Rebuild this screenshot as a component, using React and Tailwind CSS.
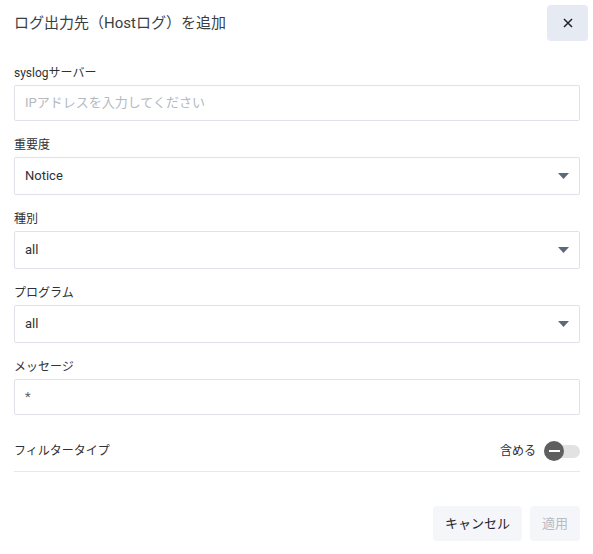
import React from 'react';

const font = { fontFamily: 'Roboto, "Noto Sans CJK JP", sans-serif' };

function Label({ children }) {
  return <div className="h-[16px] mb-[4px] text-[12px] leading-[16px] text-[#303133]">{children}</div>;
}

function Arrow() {
  return (
    <svg width="11" height="6" viewBox="0 0 11 6" className="shrink-0">
      <path d="M0 0 L11 0 L5.5 6 Z" fill="#5d6878" />
    </svg>
  );
}

function SelectField({ label, value }) {
  return (
    <div className="mb-[16px]">
      <Label>{label}</Label>
      <div className="h-[38px] border border-[#dfe2e8] rounded-[2px] flex items-center justify-between pl-[10px] pr-[10px]">
        <span className="text-[13px] text-[#303133]">{value}</span>
        <Arrow />
      </div>
    </div>
  );
}

function InputField({ label, value, placeholder }) {
  return (
    <div>
      <Label>{label}</Label>
      <div className="h-[36px] border border-[#dfe2e8] rounded-[2px] flex items-center pl-[10px]">
        {value ? (
          <span className="text-[13px] text-[#606266]">{value}</span>
        ) : (
          <span className="text-[13px] text-[#b4b8bf]">{placeholder}</span>
        )}
      </div>
    </div>
  );
}

export default function App() {
  return (
    <div className="w-[593px] h-[554px] bg-white" style={font}>
      {/* ヘッダー */}
      <div className="flex justify-between items-start pl-[14px] pr-[5px] pt-[5px]">
        <h1 className="h-[36px] leading-[36px] text-[15px] text-[#3a3d42]">ログ出力先（Hostログ）を追加</h1>
        <button className="w-[41px] h-[36px] rounded-[4px] bg-[#e6eaf2] flex items-center justify-center">
          <svg width="10" height="10" viewBox="0 0 10 10">
            <path d="M1 1 L9 9 M9 1 L1 9" stroke="#1f2329" strokeWidth="1.5" />
          </svg>
        </button>
      </div>

      {/* フォーム */}
      <div className="pl-[14px] pr-[13px] pt-[24px]">
        <div className="mb-[16px]">
          <InputField label="syslogサーバー" placeholder="IPアドレスを入力してください" />
        </div>
        <SelectField label="重要度" value="Notice" />
        <SelectField label="種別" value="all" />
        <SelectField label="プログラム" value="all" />
        <InputField label="メッセージ" value="*" />

        <div className="mt-[16px] h-[41px] border-b border-[#e6e8ec] flex items-center justify-between">
          <span className="text-[12px] text-[#303133]">フィルタータイプ</span>
          <div className="flex items-center gap-[8px]">
            <span className="text-[12px] text-[#303133]">含める</span>
            <div className="relative w-[36px] h-[20px] flex items-center">
              <div className="w-[36px] h-[13px] rounded-full bg-[#e2e2e2]" />
              <div className="absolute left-0 top-0 w-[20px] h-[20px] rounded-full bg-[#5f5f5f] flex items-center justify-center">
                <div className="w-[11px] h-[2px] bg-white" />
              </div>
            </div>
          </div>
        </div>

        {/* フッター */}
        <div className="mt-[34px] flex justify-end gap-[8px]">
          <button className="h-[35px] px-[12px] rounded-[4px] bg-[#f4f6fa] text-[13px] text-[#1f2329]">キャンセル</button>
          <button className="h-[35px] px-[12px] rounded-[4px] bg-[#f4f6fa] text-[13px] text-[#b8bcc4]">適用</button>
        </div>
      </div>
    </div>
  );
}
